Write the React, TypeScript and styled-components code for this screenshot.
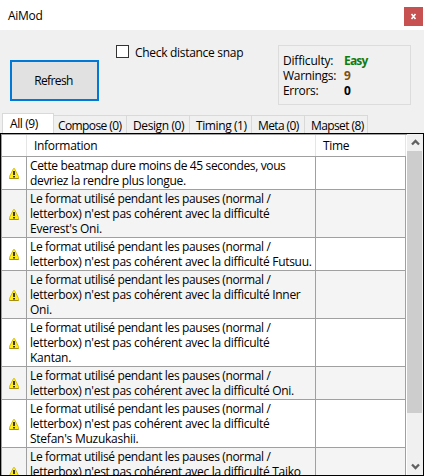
import React from "react";
import styled, { createGlobalStyle } from "styled-components";

const Global = createGlobalStyle`
  * { box-sizing: border-box; }
  html, body { margin: 0; padding: 0; overflow: hidden; background: #f0f0f0; }
`;

const Window = styled.main`
  width: 424px;
  height: 476px;
  display: flex;
  flex-direction: column;
  overflow: hidden;
  background: #f0f0f0;
  color: #000;
  font: 12px/15px "Open Sans", "Noto Sans", sans-serif;
  white-space: nowrap;
`;

const TitleBar = styled.header`
  height: 30px;
  flex: none;
  display: flex;
  justify-content: space-between;
  padding: 7px 1px 0 8px;
  background: #fff;
`;

const Title = styled.h1`
  margin: 1px 0 0;
  font: inherit;
`;

const CloseButton = styled.button`
  width: 19px;
  height: 19px;
  padding: 0;
  border: 0;
  background: #c75050;
  display: grid;
  place-items: center;
`;

const Text = styled.span<{ $tracking?: number }>`
  display: block;
  letter-spacing: ${(p) => p.$tracking ?? -0.3}px;
`;

const Toolbar = styled.section`
  height: 83px;
  flex: none;
  display: flex;
  align-items: flex-start;
  padding: 15px 13px 0 10px;
`;

const RefreshButton = styled.button`
  width: 89px;
  height: 41px;
  margin: 15px 17px 0 0;
  padding: 0 2px 0 0;
  border: 2px solid #0078d7;
  background: #e1e1e1;
  color: #000;
  font: inherit;
`;

const CheckOption = styled.label`
  flex: 1;
  display: flex;
  gap: 6px;
`;

const CheckSquare = styled.span`
  width: 13px;
  height: 13px;
  border: 1px solid #333;
  background: #fff;
`;

const Summary = styled.dl`
  width: 133px;
  height: 60px;
  margin: 0;
  padding: 7px 0 0 4px;
  border: 1px solid #dcdcdc;
  display: grid;
  grid-template-columns: 61px 1fr;
  grid-auto-rows: 15px;
`;

const Term = styled.dt``;

const Value = styled.dd<{ $color: string }>`
  margin: 0;
  font-weight: 700;
  color: ${(p) => p.$color};
`;

const TabBar = styled.nav`
  height: 20px;
  flex: none;
  display: flex;
  align-items: flex-end;
  padding-left: 2px;
`;

const Tab = styled.button<{ $width: number; $indent: number; $active?: boolean }>`
  width: ${(p) => p.$width}px;
  height: ${(p) => (p.$active ? 20 : 18)}px;
  padding: 2px 0 0 ${(p) => p.$indent}px;
  border: 1px solid #d9d9d9;
  border-width: ${(p) => (p.$active ? "1px 1px 0 1px" : "1px 1px 0 0")};
  background: ${(p) => (p.$active ? "#fff" : "#f0f0f0")};
  color: #000;
  font: inherit;
  text-align: left;
  display: flex;
  align-items: flex-start;
`;

const ListFrame = styled.section`
  height: 343px;
  flex: none;
  display: flex;
  border: 1px solid #000;
  overflow: hidden;
`;

const Grid = styled.div`
  width: 406px;
  padding-right: 1px;
  border-top: 1px solid #a0a0a0;
  border-left: 1px solid #a0a0a0;
  background: #fff;
`;

const HeaderRow = styled.div`
  height: 22px;
  display: grid;
  grid-template-columns: 25px 289px 90px;
  border-bottom: 1px solid #a0a0a0;
`;

const HeaderCell = styled.div`
  padding: 3px 0 0 7px;
  border-right: 1px solid #e5e5e5;
`;

const Row = styled.div<{ $shaded: boolean; $height: number }>`
  height: ${(p) => p.$height}px;
  display: grid;
  grid-template-columns: 25px 289px 90px;
  border-bottom: 1px solid #a0a0a0;
  background: ${(p) => (p.$shaded ? "#f4f4f4" : "#fff")};
`;

const Cell = styled.div`
  padding: 1px 0 0 3px;
  border-right: 1px solid #a0a0a0;
  display: flex;
  flex-direction: column;
  align-items: flex-start;
`;

const IconCell = styled(Cell)`
  padding: 1px 0 0;
  align-items: center;
  justify-content: center;
`;

const ScrollBar = styled.div`
  width: 16px;
  display: flex;
  flex-direction: column;
`;

const ScrollArrow = styled.div`
  height: 17px;
  display: grid;
  place-items: center;
`;

const ScrollThumb = styled.div`
  height: 262px;
  margin-right: 1px;
  background: #cdcdcd;
`;

const ScrollTrack = styled.div`
  flex: 1;
`;

const WarningIcon = () => (
  <svg width="10" height="11" viewBox="0 0 10 11">
    <path d="M4.5.5h1L9.5 8.5v2h-9v-2z" fill="#ffee10" stroke="#d3bf28" strokeLinejoin="round" />
    <path d="M.5 10.5h9" stroke="#a78e14" />
    <path d="M4 3h2v4H4zM4 8h2v1.5H4z" fill="#3b3615" />
  </svg>
);

const Chevron = ({ down = false }: { down?: boolean }) => (
  <svg width="9" height="7" viewBox="0 0 9 7">
    <path d={down ? "M1 1.5 4.5 5 8 1.5" : "M1 5.5 4.5 2 8 5.5"} fill="none" stroke="#606060" strokeWidth="2.3" />
  </svg>
);

const tabs = [
  { label: "All (9)", width: 52, indent: 7, tracking: -0.4 },
  { label: "Compose (0)", width: 73, indent: 4, tracking: -0.6 },
  { label: "Design (0)", width: 63, indent: 6, tracking: -0.4 },
  { label: "Timing (1)", width: 62, indent: 6, tracking: -0.4 },
  { label: "Meta (0)", width: 53, indent: 6, tracking: -0.6 },
  { label: "Mapset (8)", width: 63, indent: 6, tracking: -0.6 },
];

const opening = { text: "Le format utilisé pendant les pauses (normal /", tracking: -0.35 };
const pause = (name = "") => ({
  text: "letterbox) n'est pas cohérent avec la difficulté" + name,
  tracking: -0.29,
});
const ending = (text: string) => ({ text, tracking: -0.25 });

const messages = [
  [
    { text: "Cette beatmap dure moins de 45 secondes, vous", tracking: -0.37 },
    { text: "devriez la rendre plus longue.", tracking: -0.32 },
  ],
  [opening, pause(), ending("Everest's Oni.")],
  [opening, pause(" Futsuu.")],
  [opening, pause(" Inner"), ending("Oni.")],
  [opening, pause(), ending("Kantan.")],
  [opening, pause(" Oni.")],
  [opening, pause(), ending("Stefan's Muzukashii.")],
  [opening, pause(" Taiko"), ending("Oni.")],
];

export default function App() {
  return (
    <Window>
      <Global />
      <TitleBar>
        <Title><Text>AiMod</Text></Title>
        <CloseButton aria-label="Close">
          <svg width="7" height="7" viewBox="0 0 7 7"><path d="m1.5 1 4 5m0-5-4 5" stroke="#fff" strokeWidth="1.6" /></svg>
        </CloseButton>
      </TitleBar>
      <Toolbar>
        <RefreshButton><Text $tracking={-0.6}>Refresh</Text></RefreshButton>
        <CheckOption><CheckSquare /><Text>Check distance snap</Text></CheckOption>
        <Summary>
          <Term><Text $tracking={-0.2}>Difficulty:</Text></Term><Value $color="#107c10"><Text $tracking={-0.8}>Easy</Text></Value>
          <Term><Text>Warnings:</Text></Term><Value $color="#80500f"><Text>9</Text></Value>
          <Term><Text>Errors:</Text></Term><Value $color="#000"><Text>0</Text></Value>
        </Summary>
      </Toolbar>
      <TabBar>
        {tabs.map((tab, i) => (
          <Tab key={tab.label} $width={tab.width} $indent={tab.indent} $active={i === 0}>
            <Text $tracking={tab.tracking}>{tab.label}</Text>
          </Tab>
        ))}
      </TabBar>
      <ListFrame>
        <Grid>
          <HeaderRow>
            <HeaderCell /><HeaderCell><Text>Information</Text></HeaderCell><HeaderCell><Text>Time</Text></HeaderCell>
          </HeaderRow>
          {messages.map((lines, i) => (
            <Row key={i} $shaded={i % 2 === 1} $height={lines.length * 15 + 3}>
              <IconCell><WarningIcon /></IconCell>
              <Cell>
                {lines.map((line) => <Text key={line.text} $tracking={line.tracking}>{line.text}</Text>)}
              </Cell>
              <Cell />
            </Row>
          ))}
        </Grid>
        <ScrollBar>
          <ScrollArrow><Chevron /></ScrollArrow>
          <ScrollThumb />
          <ScrollTrack />
          <ScrollArrow><Chevron down /></ScrollArrow>
        </ScrollBar>
      </ListFrame>
    </Window>
  );
}
